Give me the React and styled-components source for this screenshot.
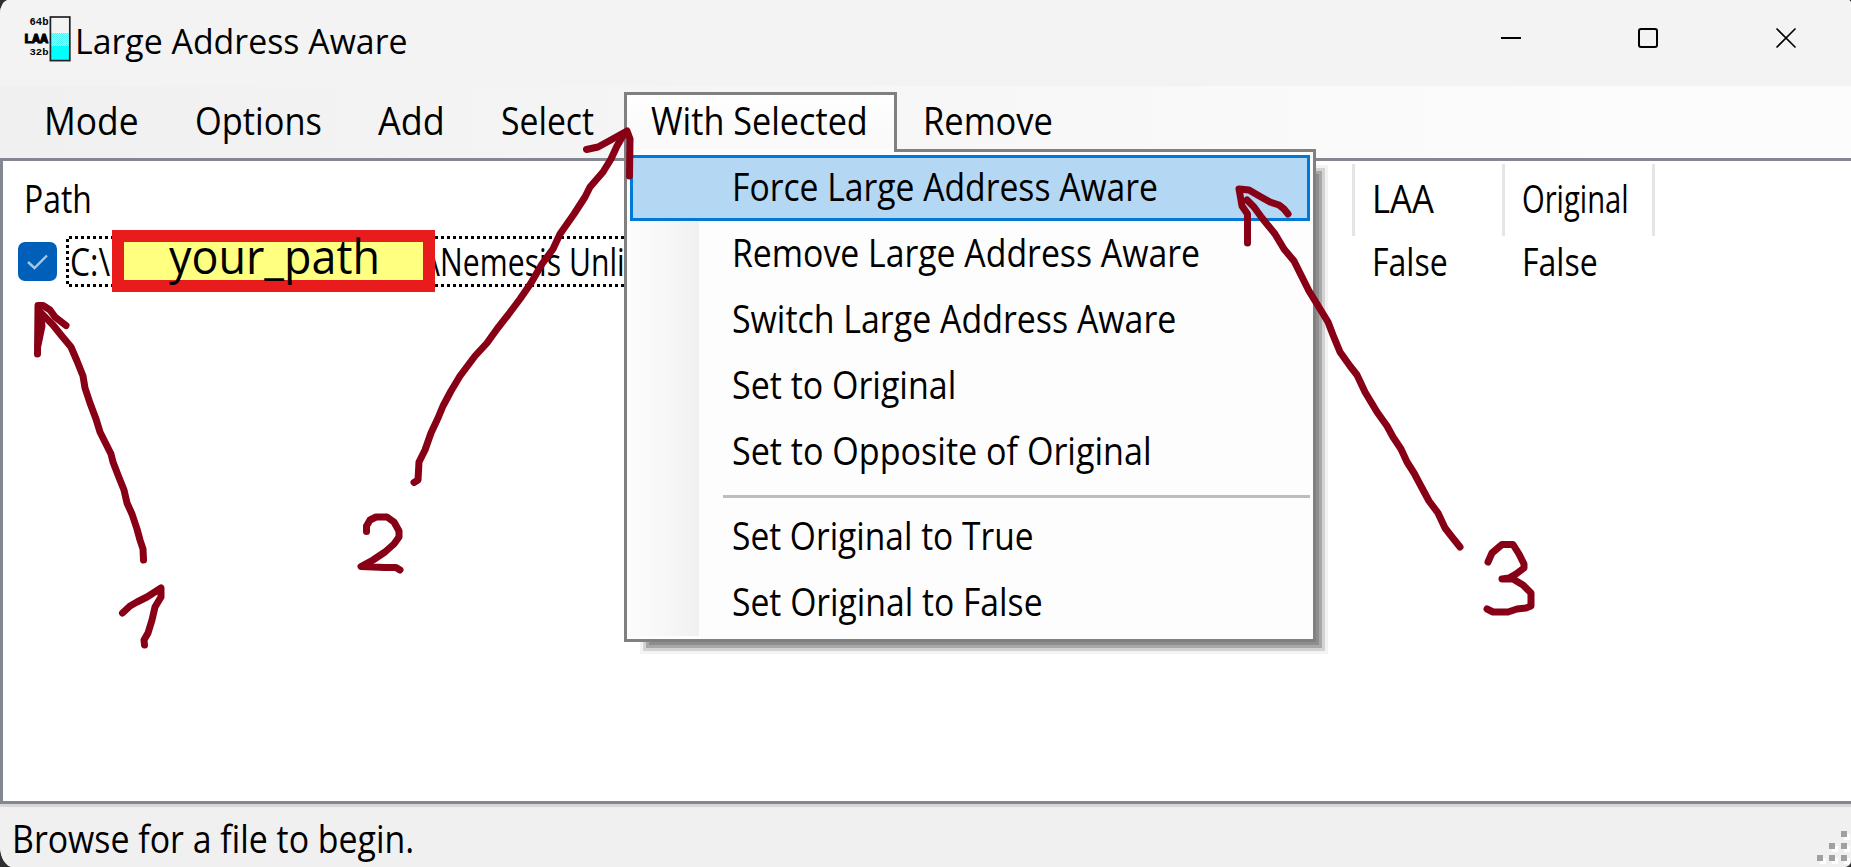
import React from 'react';
import styled, { createGlobalStyle, css } from 'styled-components';

const GlobalStyle = createGlobalStyle`
  * { box-sizing: border-box; }
  body { margin: 0; background: #2f2f2f; overflow: hidden; }
`;

const Window = styled.main`
  position: relative;
  display: flex;
  flex-direction: column;
  width: 1851px;
  height: 867px;
  overflow: hidden;
  background: #f0f0f0;
  border-radius: 9px 3px 7px 13px / 14px 4px 6px 21px;
  color: #000;
  font-family: "Open Sans", "Noto Sans", sans-serif;
`;

const Label = styled.span`
  display: inline-block;
  flex: none;
  white-space: pre;
  font-size: ${(p) => p.$size || 37.5}px;
  line-height: ${(p) => p.$line}px;
  transform: scaleX(${(p) => p.$fit || 1});
  transform-origin: 0 50%;
`;

const TitleBar = styled.header`
  display: flex;
  flex: none;
  height: 86px;
  padding-left: 22px;
  background: #f3f3f3;
`;

const AppIcon = styled.svg`
  flex: none;
  width: 53px;
  height: 64px;
`;

const Title = styled.h1`
  flex: 1;
  margin: 0;
  font-weight: 400;
  line-height: 0;
`;

const WindowButton = styled.button`
  display: flex;
  flex: none;
  justify-content: center;
  width: 138px;
  height: 86px;
  padding: 28px 0 0;
  border: 0;
  background: none;
  svg { display: block; width: 20px; height: 20px; overflow: visible; }
`;

const Controls = styled.div`
  display: flex;
  flex: none;
  width: 409px;
`;

const MenuBar = styled.nav`
  position: relative;
  z-index: 2;
  display: flex;
  flex: none;
  height: 72px;
  padding-left: 18px;
  background: linear-gradient(90deg, #f0f0f0, #fcfcfc 88%);
`;

const MenuItem = styled.div`
  flex: none;
  width: ${(p) => p.$width}px;
  padding-left: ${(p) => p.$inset || 26}px;
`;

const OpenMenu = styled.div`
  position: relative;
  flex: none;
  width: 273px;
  padding-top: 6px;
`;

const Tab = styled.div`
  position: relative;
  z-index: 2;
  height: 60px;
  padding-left: 24px;
  border: 3px solid #808080;
  border-bottom: 0;
  background: linear-gradient(#fff, #fafafa 70%, #fafafa 54px, #fdfdfd 54px);
`;

const Dropdown = styled.div`
  position: absolute;
  z-index: 1;
  top: 63px;
  left: 0;
  width: 692px;
  height: 493px;
`;

const DropShadow = styled.div`
  position: absolute;
  inset: 28px 0 0 28px;
  box-shadow: 0 0 0 3px #8e8e8e, 0 0 0 6px #a8a8a8, 0 0 0 9px #d3d3d3, 0 0 0 12px #f3f3f3;
`;

const MenuPanel = styled.div`
  position: relative;
  height: 100%;
  padding: 3px;
  border: 3px solid #808080;
  background: linear-gradient(90deg, #fcfcfc, #f7f7f7 55%, #f0f0f0) 3px 3px / 69px 481px no-repeat, #fdfdfd;
`;

const MenuEntry = styled.div`
  height: 66px;
  margin: 0 -3px 0 0;
  padding-left: ${(p) => p.$inset}px;
  line-height: 0;
  ${(p) => p.$active && css`
    margin-right: 0;
    padding-left: 99px;
    border: 3px solid #0078d7;
    background: #b4d7f3;
  `}
`;

const Separator = styled.hr`
  height: 3px;
  margin: 10px 0 6px 93px;
  border: 0;
  background: #bdbdbd;
`;

const ListView = styled.section`
  display: flex;
  flex-direction: column;
  flex: none;
  height: 646px;
  border: solid #828790;
  border-width: 3px 0 3px 3px;
  background: #fff;
`;

const HeaderRow = styled.div`
  display: grid;
  grid-template-columns: 1349px 150px 150px 1fr;
  height: 75px;
`;

const HeaderCell = styled.div`
  height: 72px;
  margin-top: 3px;
  padding-left: ${(p) => (p.$first ? 21 : 17)}px;
  ${(p) => !p.$first && css`border-left: 3px solid #e5e5e5;`}
`;

const DataRow = styled.div`
  display: grid;
  grid-template-columns: 1349px 150px 150px 1fr;
  height: 51px;
`;

const PathCell = styled.div`
  display: flex;
  padding-left: 15px;
`;

const ValueCell = styled.div`
  padding-left: 20px;
`;

const Checkbox = styled.div`
  width: 39px;
  height: 39px;
  margin: 6px 9px 0 0;
  border-radius: 7px;
  background: #005fb8;
  svg { display: block; }
`;

const FocusBox = styled.div`
  position: relative;
  display: flex;
  flex: none;
  width: 1200px;
  height: 51px;
  padding-left: 4px;
  background:
    repeating-linear-gradient(90deg, #000 0 3px, transparent 3px 6px) 3px 0 / 100% 3px no-repeat,
    repeating-linear-gradient(90deg, #000 0 3px, transparent 3px 6px) 3px 48px / 100% 3px no-repeat,
    repeating-linear-gradient(#000 0 3px, transparent 3px 6px) 0 3px / 3px 45px no-repeat;
`;

const Drive = styled.div`
  width: 359px;
`;

const Redaction = styled.div`
  position: absolute;
  top: -6px;
  left: 46px;
  width: 323px;
  height: 62px;
  padding-left: 45px;
  border: 12px solid #e81c1c;
  background: #ffff80;
  line-height: 0;
`;

const StatusBar = styled.footer`
  display: flex;
  justify-content: space-between;
  flex: none;
  height: 63px;
  padding-left: 12px;
  border-top: 3px solid #d7d7d7;
  background: #f0f0f0;
`;

const Grip = styled.svg`
  width: 36px;
  height: 60px;
`;

const Markup = styled.svg`
  position: absolute;
  z-index: 3;
  inset: 0;
  pointer-events: none;
`;

const MENUS_LEFT = [
  ['Mode', 151, 0.943, 26],
  ['Options', 185, 0.917, 26],
  ['Add', 122, 0.96, 24],
  ['Select', 148, 0.899, 25],
];

const ENTRIES = [
  ['Force Large Address Aware', 0.898, 102],
  ['Remove Large Address Aware', 0.901, 102],
  ['Switch Large Address Aware', 0.904, 102],
  ['Set to Original', 0.906, 102],
  ['Set to Opposite of Original', 0.909, 102],
  null,
  ['Set Original to True', 0.894, 102],
  ['Set Original to False', 0.898, 102],
];

const STROKES = [
  '143.5,560 143,549 140,540 137,529 132,514 127,503 124,490 118,475 113,462 111,454 105,442 100,432 96,419 90,403 85,388 83,376 77,361 71,347 61,335 53,325 46,318 41,313',
  '37.5,354 38,305.5 43,305.5 50,310 55,317 66,325.5',
  '38,345 42,326 40,312',
  '122.5,613 130,606 137,602 147,597 161,588 161,597 155,607 152,620 148,633 144,640 144.5,645',
  '366.5,531.5 366.5,526 370,520 376,517 387,517 394,522 399,531 399,537 394,544 385,552 373,560 361,566.5 385,567.5 396,567.5 400,570',
  '414,482.5 418,480 419,462 425,450 431,433 438,418 443,406 451,391 460,376 475,356 487,343 497,329 508,315 520,299 531,283 542,264 553,249 560,234 574,214 585,197 590,187 603,172 611,159 617,146 624,134',
  '586.5,149.5 598,147 609,141 627,131 630,139 629.5,176',
  '1460,547 1452,537 1445,528 1438,513 1429,501 1422,488 1414,473 1407,462 1401,449 1393,437 1387,426 1377,412 1371,402 1365,392 1357,375 1350,366 1340,352 1333,335 1328,322 1317,304 1309,291 1302,277 1294,261 1284,249 1275,234 1262,218 1254,207 1247,200',
  '1247.5,243 1247.5,214 1242,206 1239,189 1249,190 1261,197 1270,202 1279,205 1284,209 1288,214',
  '1488,562 1492,553 1502,544.5 1513,544.5 1519,554 1524,564 1524,568 1516,574 1509,578 1502,579 1513,579 1523,585 1531,593 1531,606 1526,608 1517,609 1508,612 1493,612 1487,609',
];

export default function App() {
  return (
    <>
      <GlobalStyle />
      <Window>
        <TitleBar>
          <AppIcon viewBox="22 0 53 64">
            <defs>
              <pattern id="dither" width="2" height="2" patternUnits="userSpaceOnUse">
                <rect width="2" height="2" fill="#a8fbfb" />
                <rect width="1" height="1" fill="#48f4f6" />
                <rect x="1" y="1" width="1" height="1" fill="#48f4f6" />
              </pattern>
            </defs>
            <g fontFamily="Liberation Mono, monospace" fontWeight="700">
              <text x="29.5" y="25.3" fontSize="10.5" textLength="19" lengthAdjust="spacingAndGlyphs">64b</text>
              <text x="24" y="42.9" fontSize="13.6" stroke="#000" strokeWidth="1.1" textLength="24" lengthAdjust="spacingAndGlyphs">LAA</text>
              <text x="29.5" y="54.6" fontSize="9.5" textLength="19" lengthAdjust="spacingAndGlyphs">32b</text>
            </g>
            <rect x="50.3" y="17" width="19.4" height="43.5" fill="#f3f3f3" />
            <rect x="51" y="33" width="18" height="13" fill="url(#dither)" />
            <rect x="51" y="46" width="18" height="14" fill="#00ffff" />
            <rect x="50.4" y="17" width="19.4" height="43.6" fill="none" stroke="#222" strokeWidth="1.7" />
          </AppIcon>
          <Title><Label $size={34.6} $line={82} $fit={0.979}>Large Address Aware</Label></Title>
          <Controls>
            <WindowButton aria-label="Minimize">
              <svg><path d="M0 10H20" stroke="#000" strokeWidth="2" /></svg>
            </WindowButton>
            <WindowButton aria-label="Maximize">
              <svg><rect x="0" y="1" width="18" height="18" rx="2" fill="none" stroke="#000" strokeWidth="2" /></svg>
            </WindowButton>
            <WindowButton aria-label="Close">
              <svg><path d="M-.5 .5 18.5 19.5M18.5 .5 -.5 19.5" stroke="#000" strokeWidth="1.6" /></svg>
            </WindowButton>
          </Controls>
        </TitleBar>

        <MenuBar>
          {MENUS_LEFT.map(([text, width, fit, inset]) => (
            <MenuItem key={text} $width={width} $inset={inset}><Label $line={69} $fit={fit}>{text}</Label></MenuItem>
          ))}
          <OpenMenu>
            <Tab><Label $line={51} $fit={0.912}>With Selected</Label></Tab>
            <Dropdown>
              <DropShadow />
              <MenuPanel>
                {ENTRIES.map((entry, i) => entry ? (
                  <MenuEntry key={entry[0]} $active={i === 0} $inset={entry[2]}>
                    <Label $line={i === 0 ? 57 : 63} $fit={entry[1]}>{entry[0]}</Label>
                  </MenuEntry>
                ) : <Separator key="separator" />)}
              </MenuPanel>
            </Dropdown>
          </OpenMenu>
          <MenuItem $width={180}><Label $line={69} $fit={0.92}>Remove</Label></MenuItem>
        </MenuBar>

        <ListView>
          <HeaderRow>
            <HeaderCell $first><Label $line={69} $fit={0.85}>Path</Label></HeaderCell>
            <HeaderCell><Label $line={69} $fit={0.925}>LAA</Label></HeaderCell>
            <HeaderCell><Label $line={69} $fit={0.778}>Original</Label></HeaderCell>
            <HeaderCell />
          </HeaderRow>
          <DataRow>
            <PathCell>
              <Checkbox>
                <svg width="39" height="39"><path d="M10 20 16.5 26 29 13.5" fill="none" stroke="#a5c8e6" strokeWidth="2.4" /></svg>
              </Checkbox>
              <FocusBox>
                <Drive><Label $line={51} $fit={0.85}>C:\</Label></Drive>
                <Label $line={51} $fit={0.805}>\Nemesis Unli</Label>
                <Redaction><Label $size={47} $line={28} $fit={0.955}>your_path</Label></Redaction>
              </FocusBox>
            </PathCell>
            <ValueCell><Label $line={51} $fit={0.855}>False</Label></ValueCell>
            <ValueCell><Label $line={51} $fit={0.855}>False</Label></ValueCell>
          </DataRow>
        </ListView>

        <StatusBar>
          <Label $line={63} $fit={0.903}>Browse for a file to begin.</Label>
          <Grip viewBox="1815 807 36 60">
            {[[1841, 831], [1829, 843], [1841, 843], [1817, 855], [1829, 855], [1841, 855]].map(([x, y]) => (
              <g key={`${x}-${y}`}>
                <rect x={x + 3} y={y + 3} width="6" height="6" fill="#fff" />
                <rect x={x} y={y} width="6" height="6" fill="#a0a0a0" />
              </g>
            ))}
          </Grip>
        </StatusBar>

        <Markup width="1851" height="867" fill="none" stroke="#880015" strokeWidth="7" strokeLinecap="round" strokeLinejoin="round">
          {STROKES.map((points) => <polyline key={points} points={points} />)}
        </Markup>
      </Window>
    </>
  );
}
